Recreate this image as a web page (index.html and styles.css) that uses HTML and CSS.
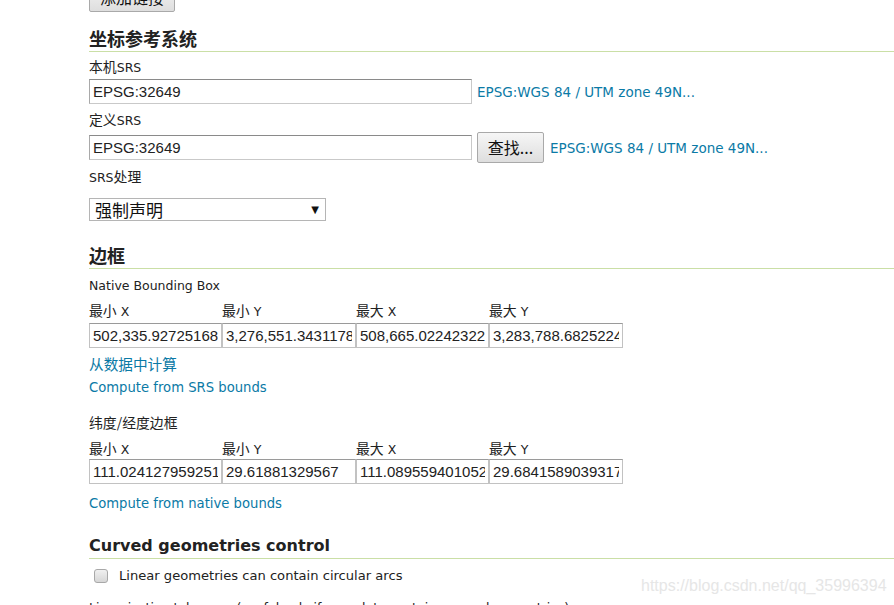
FILE: index.html
```html
<!DOCTYPE html>
<html>
<head>
<meta charset="utf-8">
<link rel="stylesheet" href="styles.css">
</head>
<body>
<div class="page">
  <div class="top-btn-row"><button class="btn top-btn">添加链接</button></div>

  <h3 class="section cjk">坐标参考系统</h3>
  <div class="label l1"><span class="zh">本机</span>SRS</div>
  <div class="row r1">
    <input class="field wide" value="EPSG:32649">
    <a class="link srs-link">EPSG:WGS 84 / UTM zone 49N...</a>
  </div>
  <div class="label l2"><span class="zh">定义</span>SRS</div>
  <div class="row r2">
    <input class="field wide" value="EPSG:32649">
    <button class="btn find">查找...</button>
    <a class="link srs-link2">EPSG:WGS 84 / UTM zone 49N...</a>
  </div>
  <div class="label l3">SRS<span class="zh">处理</span></div>
  <div class="select"><span>强制声明</span><span class="arrow">▼</span></div>

  <h3 class="section cjk s2">边框</h3>
  <div class="label l4">Native Bounding Box</div>
  <div class="grid labels lb1">
    <span><span class="zh">最小</span> X</span><span><span class="zh">最小</span> Y</span><span><span class="zh">最大</span> X</span><span><span class="zh">最大</span> Y</span>
  </div>
  <div class="grid inputs in1">
    <input class="field" value="502,335.92725168">
    <input class="field" value="3,276,551.343117842">
    <input class="field" value="508,665.02242322">
    <input class="field" value="3,283,788.682522434">
  </div>
  <a class="link block l5"><span class="zh">从数据中计算</span></a>
  <a class="link block l6">Compute from SRS bounds</a>

  <div class="label l7"><span class="zh">纬度/经度边框</span></div>
  <div class="grid labels lb2">
    <span><span class="zh">最小</span> X</span><span><span class="zh">最小</span> Y</span><span><span class="zh">最大</span> X</span><span><span class="zh">最大</span> Y</span>
  </div>
  <div class="grid inputs in2">
    <input class="field" value="111.024127959251">
    <input class="field" value="29.61881329567">
    <input class="field" value="111.089559401052">
    <input class="field" value="29.684158903931746">
  </div>
  <a class="link block l8">Compute from native bounds</a>

  <h3 class="section s3">Curved geometries control</h3>
  <label class="check"><span class="box"></span>Linear geometries can contain circular arcs</label>
  <div class="label l9">Linearization tolerance (useful only if your data contains curved geometries)</div>
</div>
<div class="watermark">https://blog.csdn.net/qq_35996394</div>
</body>
</html>
```

FILE: styles.css
```css
html, body {
  margin: 0;
  padding: 0;
  background: #fff;
  overflow: hidden;
  height: 605px;
}
body {
  font-family: "DejaVu Sans", Verdana, "Noto Sans CJK SC", sans-serif;
  font-size: 12.5px;
  color: #222;
  position: relative;
}
.zh {
  font-family: "Noto Sans CJK SC", sans-serif;
  font-size: 1.11em;
  line-height: 0;
}
.page {
  padding-left: 89px;
}
.top-btn-row {
  height: 12px;
  overflow: hidden;
  position: relative;
}
.btn {
  font-family: "Noto Sans CJK SC", sans-serif;
  font-size: 16px;
  color: #111;
  background: linear-gradient(#f6f6f6, #dedede);
  border: 1px solid #a9a9a9;
  border-radius: 2px;
  padding: 0;
  box-sizing: border-box;
}
.top-btn {
  width: 86px;
  height: 30px;
  margin-top: -18px;
  display: block;
  line-height: 26px;
}
.section {
  font-family: "DejaVu Sans", Verdana, "Noto Sans CJK SC", sans-serif;
  font-weight: bold;
  font-size: 16px;
  color: #222;
  margin: 0;
  padding: 17px 0 2px 0;
  line-height: 21px;
  border-bottom: 1px solid #cadfa6;
}
.section.cjk {
  font-family: "Noto Sans CJK SC", sans-serif;
  font-size: 18px;
  padding-top: 16px;
}
.label {
  line-height: 16px;
  height: 16px;
}
.l1 { margin-top: 8px; }
.row {
  display: flex;
  align-items: center;
  height: 25px;
}
.r1 { margin-top: 3px; }
.r2 { margin-top: 6px; }
.field {
  font-family: "Liberation Sans", Arial, sans-serif;
  font-size: 15px;
  color: #222;
  height: 25px;
  box-sizing: border-box;
  border: 1px solid #c9c9c9;
  border-top-color: #8a8a8a;
  border-left-color: #a9a9a9;
  padding: 0 3px;
  margin: 0;
  outline: none;
}
.wide { width: 383px; }
.link {
  color: #0b7aa6;
  text-decoration: none;
  font-size: 13.2px;
}
.srs-link { margin-left: 5px; font-size: 13.5px; }
.l2 { margin-top: 9px; }
.find {
  width: 67px;
  height: 31px;
  margin-left: 5px;
  line-height: 27px;
}
.srs-link2 { margin-left: 6px; font-size: 13.5px; }
.l3 { margin-top: 10px; }
.select {
  margin-top: 12px;
  width: 237px;
  height: 23px;
  box-sizing: border-box;
  border: 1px solid #b5b5b5;
  display: flex;
  align-items: center;
  justify-content: space-between;
  padding: 0 6px 0 5px;
  font-family: "Noto Sans CJK SC", sans-serif;
  font-size: 17px;
  color: #111;
}
.select .arrow {
  font-family: "DejaVu Sans", sans-serif;
  font-size: 10px;
}
.section.cjk.s2 { padding-top: 24px; }
.l4 { margin-top: 9px; }
.grid {
  display: grid;
  grid-template-columns: 133px 134px 133px 134px;
  width: 534px;
}
.labels {
  line-height: 16px;
  height: 16px;
}
.lb1 { margin-top: 10px; }
.lb2 { margin-top: 10px; }
.in1 { margin-top: 3px; }
.in2 { margin-top: 1px; }
.inputs .field {
  width: 100%;
  padding: 0 3px;
  border-color: #c2c2c2;
  border-top-color: #9a9a9a;
}
.block { display: block; line-height: 16px; height: 16px; }
.l5 { margin-top: 10px; }
.l6 { margin-top: 6px; }
.l7 { margin-top: 20px; }
.l8 { margin-top: 12px; }
.s3 { padding-top: 23px; }
.check {
  display: flex;
  align-items: center;
  margin-top: 9px;
  padding-left: 5px;
  font-size: 13.1px;
  line-height: 16px;
}
.box {
  width: 12px;
  height: 12px;
  border: 1px solid #a8a8a8;
  border-radius: 3px;
  background: linear-gradient(#f0f0f0, #d6d6d6);
  margin-right: 11px;
}
.l9 { margin-top: 16px; font-size: 12.5px; }
.watermark {
  position: absolute;
  left: 641px;
  top: 577px;
  font-family: "Liberation Sans", Arial, sans-serif;
  font-size: 16px;
  color: #e6e6e6;
  white-space: nowrap;
}
```
